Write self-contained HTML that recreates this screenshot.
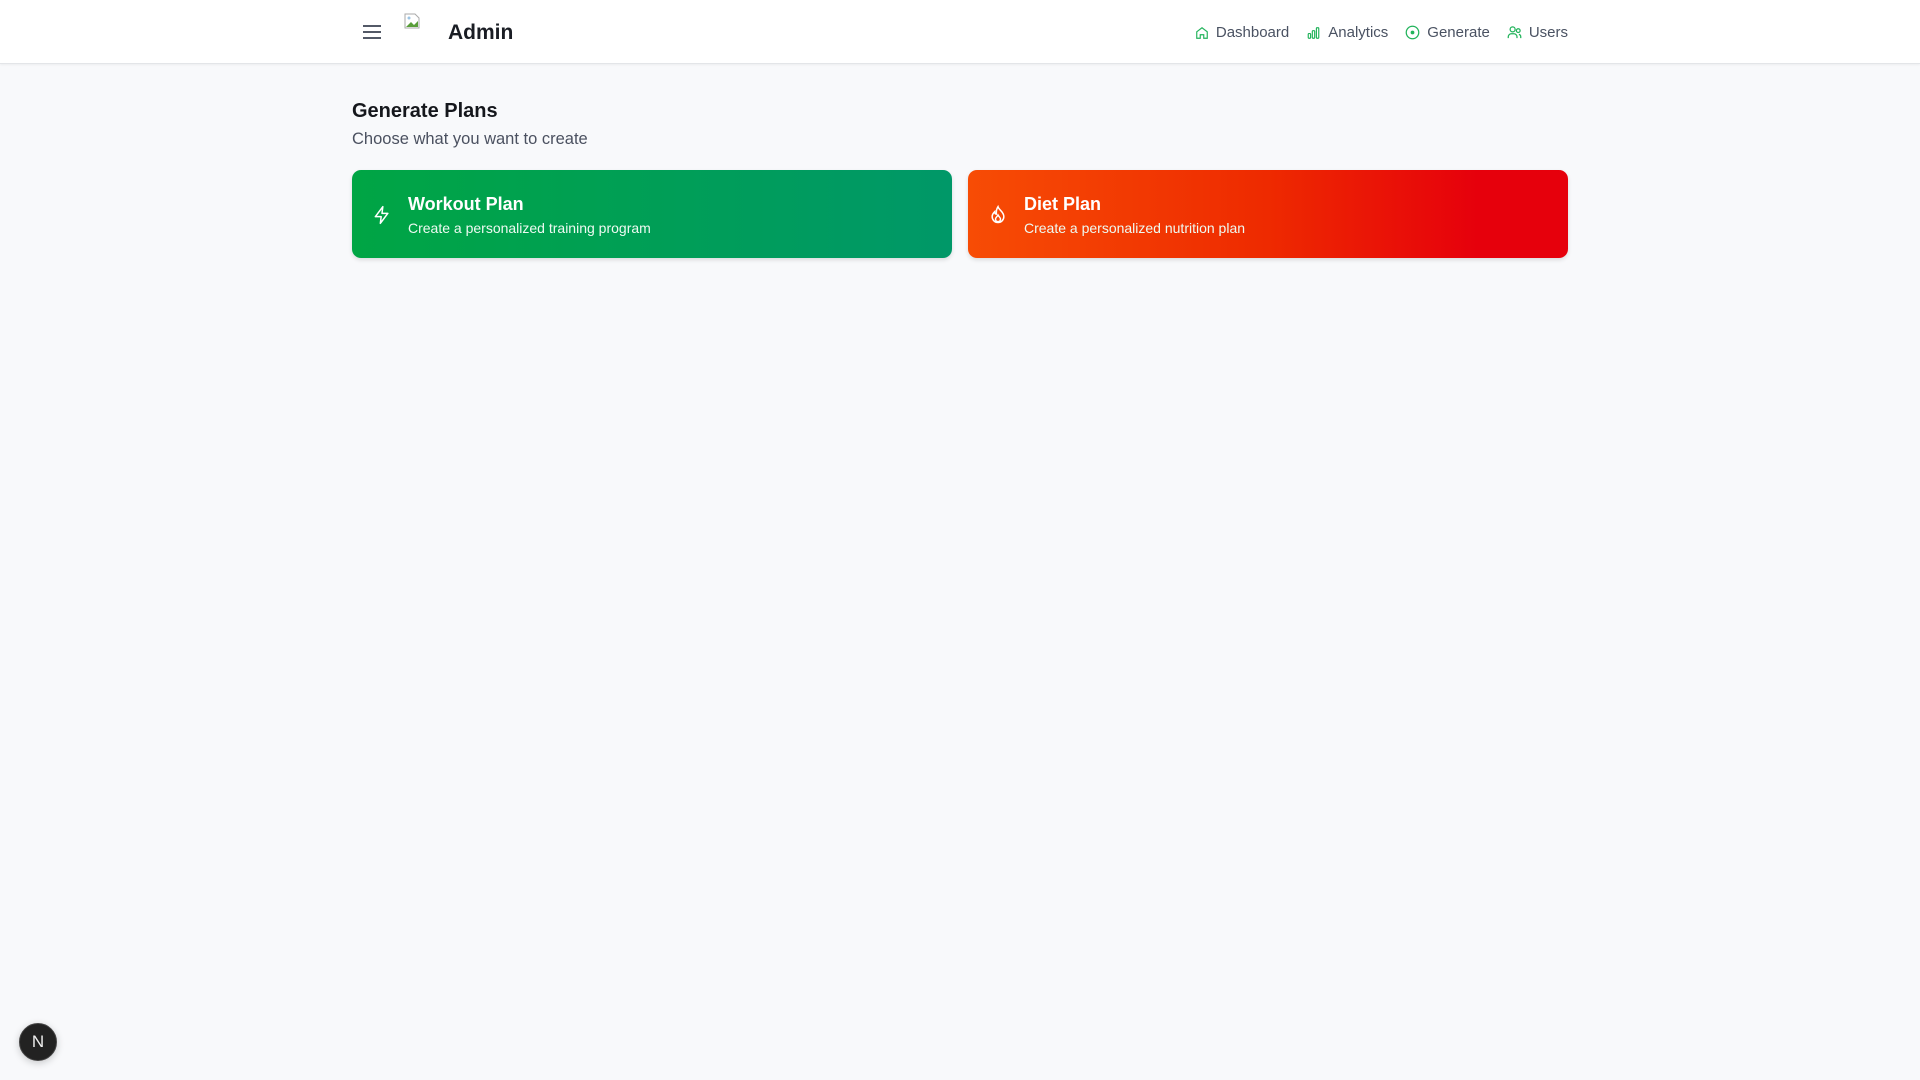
<!DOCTYPE html>
<html><head><meta charset="utf-8"><style>
*{box-sizing:border-box;margin:0;padding:0}
body{width:1920px;height:1080px;background:#f8f9fb;font-family:"Liberation Sans",sans-serif;position:relative;overflow:hidden}
.hdr{position:absolute;left:0;top:0;width:1920px;height:64px;background:#fff;border-bottom:1px solid #e3e5e8;box-shadow:0 1px 2px rgba(0,0,0,.05)}
.ham{position:absolute;left:362px;top:24px}
.img{position:absolute;left:404px;top:13px;width:16px;height:16px}
.admin{position:absolute;left:448px;top:21px;font-size:21px;font-weight:bold;color:#1a1d24}
.nav{position:absolute;right:352px;top:24px;display:flex;gap:17px;font-size:15px;color:#4a5262}
.nav span{display:flex;align-items:center;gap:7px}
h1{position:absolute;left:352px;top:100px;font-size:20px;font-weight:bold;color:#15171c}
.sub{position:absolute;left:352px;top:130px;font-size:16.5px;color:#4b5160}
.card{position:absolute;top:170px;height:88px;border-radius:9px;color:#fff;box-shadow:0 2px 4px rgba(0,0,0,.12)}
.c1{left:352px;width:600px;background:linear-gradient(90deg,#00a544,#009868)}
.c2{left:968px;width:600px;background:linear-gradient(90deg,#f74c05,#ee2a00 50%,#e6000c 85%)}
.card .t{position:absolute;left:56px;top:24px;font-size:18px;font-weight:bold}
.card .s{position:absolute;left:56px;top:50px;font-size:14px;color:#eefaf2}
.card svg{position:absolute;left:20px;top:34px}
.n{position:absolute;left:19px;top:1023px;width:38px;height:38px;border-radius:50%;background:#222;border:1px solid #444;color:#eee;font-size:17px;text-align:center;line-height:36px;box-shadow:0 2px 8px rgba(0,0,0,.2)}
</style></head><body>
<div class="hdr">
<svg class="ham" width="20" height="16" viewBox="0 0 20 16"><path d="M1 2h18M1 8h18M1 14h18" stroke="#3b4252" stroke-width="1.8"/></svg>
<svg class="img" viewBox="0 0 16 16"><path d="M1 1h10l4 4v10H1z" fill="#fff" stroke="#aaa"/><path d="M2 14l5-5 3 3 4-4v6z" fill="#5a9e3a"/><circle cx="5" cy="5" r="1.5" fill="#9cc4e4"/></svg>
<div class="admin">Admin</div>
<div class="nav">
<span><svg width="14" height="14" viewBox="0 0 24 24" fill="none" stroke="#22b35b" stroke-width="2"><path d="M3 10l9-7 9 7v11H15v-6H9v6H3z"/></svg>Dashboard</span>
<span><svg width="15" height="14" viewBox="0 0 24 24" fill="none" stroke="#22b35b" stroke-width="2"><rect x="3" y="13" width="4" height="8" rx="1"/><rect x="10" y="8" width="4" height="13" rx="1"/><rect x="17" y="3" width="4" height="18" rx="1"/></svg>Analytics</span>
<span><svg width="15" height="15" viewBox="0 0 24 24" fill="none" stroke="#22b35b" stroke-width="2"><circle cx="12" cy="12" r="10"/><circle cx="12" cy="12" r="2" fill="#22b35b"/></svg>Generate</span>
<span><svg width="15" height="15" viewBox="0 0 24 24" fill="none" stroke="#22b35b" stroke-width="2"><circle cx="9" cy="7" r="4"/><path d="M2 21v-2a5 5 0 0 1 5-5h4a5 5 0 0 1 5 5v2"/><circle cx="18" cy="9" r="3"/><path d="M19 15a4 4 0 0 1 3 4v2"/></svg>Users</span>
</div>
</div>
<h1>Generate Plans</h1>
<div class="sub">Choose what you want to create</div>
<div class="card c1"><svg width="20" height="22" viewBox="0 0 24 24" fill="none" stroke="#fff" stroke-width="1.8" stroke-linejoin="round"><path d="M13 2L4 14h7l-1 8 9-12h-7z"/></svg><div class="t">Workout Plan</div><div class="s">Create a personalized training program</div></div>
<div class="card c2"><svg width="20" height="22" viewBox="0 0 24 24" fill="none" stroke="#fff" stroke-width="1.8"><path d="M12 2c1 4 7 6 7 12a7 7 0 0 1-14 0c0-3 2-5 3-6 0 2 1 3 2 3 0-4 0-6 2-9z"/><path d="M12 20a3 3 0 0 1-3-3c0-2 2-3 3-5 1 2 3 3 3 5a3 3 0 0 1-3 3z"/></svg><div class="t">Diet Plan</div><div class="s">Create a personalized nutrition plan</div></div>
<div class="n">N</div>
</body></html>
